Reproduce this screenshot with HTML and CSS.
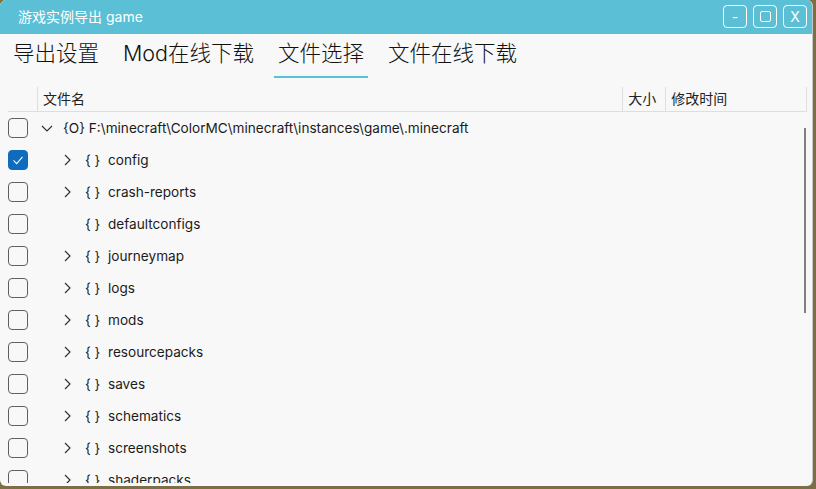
FILE: index.html
```html
<!DOCTYPE html>
<html lang="zh">
<head>
<meta charset="utf-8">
<title>游戏实例导出 game</title>
<link rel="stylesheet" href="styles.css">
</head>
<body>
<div class="window">
  <div class="titlebar">
    <div class="title">游戏实例导出 game</div>
    <div class="controls">
      <div class="ctl">-</div>
      <div class="ctl"><span class="sq"></span></div>
      <div class="ctl">X</div>
    </div>
  </div>
  <div class="tabs">
    <div class="tab">导出设置</div>
    <div class="tab">Mod在线下载</div>
    <div class="tab active">文件选择</div>
    <div class="tab">文件在线下载</div>
  </div>
  <div class="grid">
    <div class="header">
      <div class="hcell hcheck"></div>
      <div class="hcell hname">文件名</div>
      <div class="hcell hsize">大小</div>
      <div class="hcell htime">修改时间</div>
    </div>
    <div class="list">
      <div class="scrollbar"></div>
      <div class="row">
        <span class="cb"></span>
        <span class="cell lvl0">
          <svg class="chev" viewBox="0 0 16 16"><path d="M3 6 L8 11 L13 6" /></svg>
          <span class="name">{O} F:\minecraft\ColorMC\minecraft\instances\game\.minecraft</span>
        </span>
      </div>
      <div class="row">
        <span class="cb checked"><svg viewBox="0 0 20 20"><path d="M5 10.5 L8.5 14 L15 6.5" /></svg></span>
        <span class="cell lvl1">
          <svg class="chev" viewBox="0 0 16 16"><path d="M6 3 L11 8 L6 13" /></svg>
          <span class="br">{ }</span><span class="name">config</span>
        </span>
      </div>
      <div class="row">
        <span class="cb"></span>
        <span class="cell lvl1">
          <svg class="chev" viewBox="0 0 16 16"><path d="M6 3 L11 8 L6 13" /></svg>
          <span class="br">{ }</span><span class="name">crash-reports</span>
        </span>
      </div>
      <div class="row">
        <span class="cb"></span>
        <span class="cell lvl1">
          <span class="chev"></span>
          <span class="br">{ }</span><span class="name">defaultconfigs</span>
        </span>
      </div>
      <div class="row">
        <span class="cb"></span>
        <span class="cell lvl1">
          <svg class="chev" viewBox="0 0 16 16"><path d="M6 3 L11 8 L6 13" /></svg>
          <span class="br">{ }</span><span class="name">journeymap</span>
        </span>
      </div>
      <div class="row">
        <span class="cb"></span>
        <span class="cell lvl1">
          <svg class="chev" viewBox="0 0 16 16"><path d="M6 3 L11 8 L6 13" /></svg>
          <span class="br">{ }</span><span class="name">logs</span>
        </span>
      </div>
      <div class="row">
        <span class="cb"></span>
        <span class="cell lvl1">
          <svg class="chev" viewBox="0 0 16 16"><path d="M6 3 L11 8 L6 13" /></svg>
          <span class="br">{ }</span><span class="name">mods</span>
        </span>
      </div>
      <div class="row">
        <span class="cb"></span>
        <span class="cell lvl1">
          <svg class="chev" viewBox="0 0 16 16"><path d="M6 3 L11 8 L6 13" /></svg>
          <span class="br">{ }</span><span class="name">resourcepacks</span>
        </span>
      </div>
      <div class="row">
        <span class="cb"></span>
        <span class="cell lvl1">
          <svg class="chev" viewBox="0 0 16 16"><path d="M6 3 L11 8 L6 13" /></svg>
          <span class="br">{ }</span><span class="name">saves</span>
        </span>
      </div>
      <div class="row">
        <span class="cb"></span>
        <span class="cell lvl1">
          <svg class="chev" viewBox="0 0 16 16"><path d="M6 3 L11 8 L6 13" /></svg>
          <span class="br">{ }</span><span class="name">schematics</span>
        </span>
      </div>
      <div class="row">
        <span class="cb"></span>
        <span class="cell lvl1">
          <svg class="chev" viewBox="0 0 16 16"><path d="M6 3 L11 8 L6 13" /></svg>
          <span class="br">{ }</span><span class="name">screenshots</span>
        </span>
      </div>
      <div class="row">
        <span class="cb"></span>
        <span class="cell lvl1">
          <svg class="chev" viewBox="0 0 16 16"><path d="M6 3 L11 8 L6 13" /></svg>
          <span class="br">{ }</span><span class="name">shaderpacks</span>
        </span>
      </div>
    </div>
  </div>
</div>
</body>
</html>
```
FILE: styles.css
```css
* { box-sizing: border-box; }
html, body {
  margin: 0;
  padding: 0;
  width: 816px;
  height: 489px;
  overflow: hidden;
  background: #7d6f45;
}
body {
  font-family: Inter, "Noto Sans CJK SC", sans-serif;
  color: #1b1b1b;
}
.window {
  width: 813px;
  height: 486px;
  background: #f8f8f8;
  border-radius: 6px;
  overflow: hidden;
  display: flex;
  flex-direction: column;
  border-right: 1px solid #c8c8c8;
}
.titlebar {
  height: 34px;
  background: #5bbfd6;
  display: flex;
  align-items: center;
  justify-content: space-between;
  padding: 0 5px 0 18px;
  flex: none;
}
.title {
  color: #ffffff;
  font-size: 14px;
  line-height: 18px;
}
.controls {
  display: flex;
  gap: 6px;
  align-self: flex-start;
  margin-top: 5px;
}
.ctl {
  width: 24px;
  height: 23px;
  border: 1px solid #ffffff;
  border-radius: 4px;
  color: #ffffff;
  font-size: 14px;
  display: flex;
  align-items: center;
  justify-content: center;
  line-height: 1;
}
.sq {
  width: 11px;
  height: 11px;
  border: 1.5px solid #ffffff;
  border-radius: 2px;
}
.tabs {
  display: flex;
  height: 53px;
  padding: 0 0 0 9px;
  gap: 16px;
  flex: none;
}
.tab {
  font-size: 21.5px;
  font-weight: 300;
  height: 44px;
  line-height: 38px;
  padding: 0 4px;
  color: #111111;
  border-bottom: 2px solid transparent;
}
.tab.active {
  border-bottom-color: #5bbfd6;
}
.grid {
  flex: 1;
  display: flex;
  flex-direction: column;
  min-height: 0;
  padding: 0 5px 3px 8px;
}
.header {
  display: flex;
  height: 25px;
  border-bottom: 1px solid #dedede;
  flex: none;
}
.hcell {
  font-size: 14px;
  line-height: 24px;
  color: #222222;
  border-right: 1px solid #dedede;
  padding-left: 5px;
}
.hcheck { width: 30px; }
.hname { width: 586px; }
.hsize { width: 43px; }
.htime { width: 141px; }
.list {
  position: relative;
  flex: 1;
  overflow: hidden;
}
.scrollbar {
  position: absolute;
  left: 796px;
  top: 16px;
  width: 2px;
  height: 185px;
  background: #808080;
}
.row {
  height: 32px;
  display: flex;
  align-items: center;
}
.cb {
  width: 20px;
  height: 20px;
  border: 1px solid #5e5e5e;
  border-radius: 4px;
  flex: none;
  display: flex;
  align-items: center;
  justify-content: center;
}
.cb.checked {
  background: #0f6cbd;
  border-color: #0f6cbd;
}
.cb svg {
  width: 20px;
  height: 20px;
  fill: none;
  stroke: #ffffff;
  stroke-width: 1.2;
}
.cell {
  display: flex;
  align-items: center;
  font-size: 13.6px;
  line-height: 16px;
  white-space: nowrap;
  margin-top: -1px;
}
.lvl0 { padding-left: 11px; }
.lvl1 { padding-left: 31px; }
.chev {
  width: 16px;
  height: 16px;
  flex: none;
  fill: none;
  stroke: #333333;
  stroke-width: 1.2;
  margin-right: 8px;
}
.lvl1 .chev { margin-right: 10px; }
.br {
  width: 23px;
  flex: none;
}
.name { color: #1b1b1b; }
```
